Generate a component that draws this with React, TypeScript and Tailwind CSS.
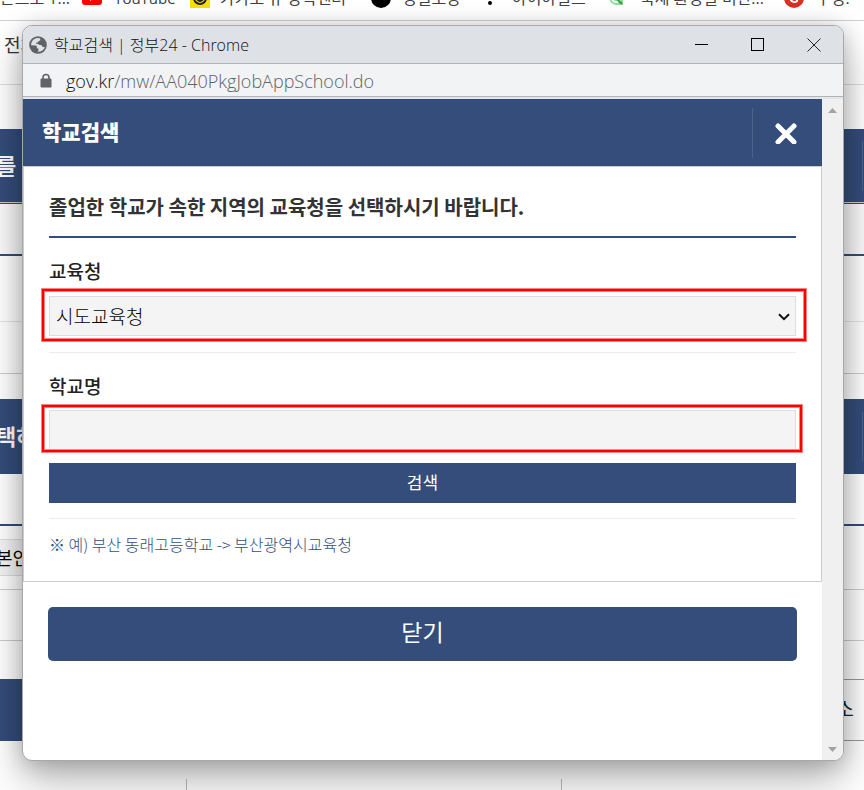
import { useState } from "react";

const regions = ["시도교육청", "서울특별시교육청", "부산광역시교육청", "대구광역시교육청"];

const GlobeIcon = () => (
  <svg viewBox="0 0 18 18" className="h-[18px] w-[18px] shrink-0">
    <circle cx="9" cy="9" r="8.800" fill="#5f6368" />
    <path
      d="M9.500 2.100C6 1.900 3.200 3.900 2.300 7.200L2 9.300l4.200.1c1.200 0 1.700.7 1.700 1.700v1.200l1.500.2v2.400l-1.200.9c3.600.5 6.700-1.700 7.600-4.900l-2.200.1-.8-1.700-2.300-.2-1.300-1.200H7.300V6.600h1.500l.9-1.600 1.500-.5V2.600z"
      fill="#dee1e6"
    />
  </svg>
);

const LockIcon = () => (
  <svg viewBox="0 0 12 16" className="h-4 w-3 shrink-0">
    <path d="M3 7V4.500a3 3 0 016 0V7" fill="none" stroke="#5f6368" strokeWidth="1.6" />
    <rect x="0.5" y="5.500" width="11" height="9" rx="1.2" fill="#5f6368" />
  </svg>
);

const Bookmarks = () => (
  <div className="flex h-[21px] flex-col justify-end overflow-hidden border-b border-[#cfcfcf] pb-3">
    <div className="flex h-5 shrink-0 items-center text-base leading-5 whitespace-nowrap text-[#3c4043]">
      <span className="w-[82px]">폰으로 1...</span>
      <svg viewBox="0 0 20 14" className="mr-3 h-[14px] w-5 shrink-0">
        <rect width="20" height="14" rx="3" fill="#f00" />
        <path d="M8 4l5 3-5 3z" fill="#fff" />
      </svg>
      <span className="w-[76px] text-[15px]">YouTube</span>
      <svg viewBox="0 0 20 20" className="mr-[10px] h-5 w-5 shrink-0">
        <rect width="20" height="20" fill="#f7e000" />
        <circle cx="10" cy="10" r="6" fill="none" stroke="#222" strokeWidth="2" />
        <path d="M7 11q3 4 6 0" fill="none" stroke="#222" strokeWidth="2" />
      </svg>
      <span className="w-[151px]">카카오 뷰 창작센터</span>
      <span className="mr-[11px] h-5 w-5 shrink-0 rounded-full bg-black" />
      <span className="w-[86px]">경일도장</span>
      <span className="mt-[10px] mr-5 h-1 w-1 shrink-0 rounded-full bg-black" />
      <span className="w-[96px]">아이아일스</span>
      <svg viewBox="0 0 16 16" className="mr-4 h-4 w-4 shrink-0">
        <path d="M1 1h14v14H9a8 8 0 01-8-8z" fill="#8fdc9a" />
        <circle cx="8" cy="8" r="4" fill="none" stroke="#fff" strokeWidth="2" />
        <path d="M9 9l5 5" stroke="#2f9e44" strokeWidth="2" />
      </svg>
      <span className="w-[144px]">국세 환경일 비만...</span>
      <svg viewBox="0 0 20 20" className="mr-3 h-5 w-5 shrink-0">
        <circle cx="10" cy="10" r="10" fill="#d93025" />
        <path d="M13 7a4 4 0 100 6v-3h-3" fill="none" stroke="#fff" strokeWidth="2" />
      </svg>
      <span>구성.</span>
    </div>
  </div>
);

const Backdrop = () => (
  <div aria-hidden="true" className="col-start-1 row-start-1 min-w-0 overflow-hidden whitespace-nowrap">
    <Bookmarks />
    <div className="flex h-16 items-center border-b border-[#dcdcdc] pb-4 pl-1 text-lg text-[#333]">
      전체
    </div>
    <div className="h-11" />
    <div className="flex h-[73px] items-center justify-between bg-[#344d7a] -indent-1 text-[22px] font-bold text-white">
      <span>를</span>
      <span className="mr-px h-[50px] w-px bg-[#4b628b]" />
    </div>
    <div className="h-[2px] border-b border-[#344d7a] bg-[#ccc]" />
    <div className="h-[52px] border-b-2 border-[#344d7a] bg-[#fafafa]" />
    <div className="h-[66px] border-b border-[#e5e5e5]" />
    <div className="h-[52px] border-b border-[#ccc]" />
    <div className="h-[25px]" />
    <div className="flex h-[75px] items-center justify-between bg-[#344d7a] -indent-1 text-[22px] font-bold text-white">
      <span>택하</span>
      <span className="mr-px h-[50px] w-px bg-[#4b628b]" />
    </div>
    <div className="h-[52px] border-b-2 border-[#344d7a]" />
    <div className="h-[13px]" />
    <div className="flex h-[37px] w-[60px] items-center border-y border-[#ddd] bg-[#f4f4f4] -indent-1 text-lg text-black">
      본인
    </div>
    <div className="h-[14px] border-b border-[#ccc]" />
    <div className="h-[51px] border-b border-[#ccc]" />
    <div className="mt-[38px] flex h-[62px] justify-between">
      <div className="w-1/4 bg-[#344d7a]" />
      <div className="flex w-1/4 items-center justify-end border-y border-[#999] pr-[10px] text-xl text-[#222]">
        주소
      </div>
    </div>
    <div className="mt-[38px] ml-[186px] h-[11px] w-[376px] border-x border-[#bbb]" />
  </div>
);

const TitleBar = () => (
  <div className="flex h-[38px] items-center justify-between border-b border-[#b0b3b7] bg-[#dee1e6] pr-[22px] pl-[6px]">
    <div className="flex items-center gap-[7px] text-[#111]">
      <GlobeIcon />
      <h1 className="text-base leading-6 font-light">학교검색 | 정부24 - Chrome</h1>
    </div>
    <div className="flex items-center gap-[42px]">
      <button aria-label="최소화">
        <svg viewBox="0 0 14 14" className="h-[14px] w-[14px]" shapeRendering="crispEdges">
          <path d="M0 6.500h13" stroke="#000" />
        </svg>
      </button>
      <button aria-label="최대화">
        <svg viewBox="0 0 14 14" className="h-[14px] w-[14px]" shapeRendering="crispEdges">
          <rect x="0.5" y="0.5" width="12" height="12" fill="none" stroke="#000" />
        </svg>
      </button>
      <button aria-label="창 닫기">
        <svg viewBox="0 0 14 14" className="h-[14px] w-[14px]">
          <path d="M0.500 0.500l13 13M13.500 0.500l-13 13" stroke="#222" />
        </svg>
      </button>
    </div>
  </div>
);

const AddressBar = () => (
  <div className="flex h-[35px] items-center gap-[14px] border-b-2 border-[#e4e5e7] bg-[#f1f3f4] pl-[17px] shadow-[inset_0_-1px_0_#b0b3b7]">
    <LockIcon />
    <p className="text-lg leading-6 font-light text-[#5f6368]">
      <span className="text-[#111]">gov.kr</span>/mw/AA040PkgJobAppSchool.do
    </p>
  </div>
);

const ScrollBar = () => (
  <div className="flex w-[21px] shrink-0 flex-col items-center justify-between bg-[#f0f0f0] pt-[9px] pb-2">
    <svg viewBox="0 0 9 5" className="h-[5px] w-[9px]">
      <path d="M0 5L4.500 0 9 5z" fill="#a3a3a3" />
    </svg>
    <svg viewBox="0 0 9 5" className="h-[5px] w-[9px]">
      <path d="M0 0h9L4.500 5z" fill="#a3a3a3" />
    </svg>
  </div>
);

const App = () => {
  const [region, setRegion] = useState(regions[0]);
  const [school, setSchool] = useState("");

  return (
    <div className="grid min-h-screen grid-cols-1 overflow-hidden bg-white font-['Open_Sans','Noto_Sans_CJK_KR',sans-serif]">
      <Backdrop />
      <div className="z-10 col-start-1 row-start-1 flex pt-[25px] pr-5 pb-[29px] pl-[22px]">
        <div className="flex min-w-0 flex-1 flex-col overflow-hidden rounded-[10px] border border-[#a8a8a8] bg-white shadow-[0_2px_21px_rgba(0,0,0,0.2),0_20px_40px_rgba(0,0,0,0.28)]">
          <TitleBar />
          <AddressBar />
          <div className="flex flex-1">
            <main className="min-w-0 flex-1 font-['Noto_Sans_CJK_KR',sans-serif]">
              <header className="flex h-[67px] items-center justify-between bg-[#344d7a] pl-[19px] text-white">
                <h2 className="pb-1 text-[21px] leading-8 font-black">학교검색</h2>
                <button
                  aria-label="닫기"
                  className="flex h-[50px] w-[70px] items-center justify-center border-l border-[#4b628b] pr-1"
                >
                  <svg viewBox="0 0 22 22" className="h-[22px] w-[22px]">
                    <path d="M3 4l16 16M19 4L3 20" stroke="#fff" strokeWidth="5" strokeLinecap="round" />
                  </svg>
                </button>
              </header>

              <form
                className="border border-[#ccc] px-[25px] pt-[25px] pb-6"
                onSubmit={(e) => e.preventDefault()}
              >
                <h3 className="border-b-2 border-[#344d7a] pb-[14px] text-xl leading-[30px] font-bold text-[#333]">
                  졸업한 학교가 속한 지역의 교육청을 선택하시기 바랍니다.
                </h3>

                <div className="border-b border-[#ececec] pt-5 pb-4">
                  <label
                    htmlFor="region"
                    className="mb-3 block text-[19px] leading-[26px] font-medium text-[#222]"
                  >
                    교육청
                  </label>
                  <div className="relative">
                    <select
                      id="region"
                      value={region}
                      onChange={(e) => setRegion(e.target.value)}
                      className="block h-10 w-full appearance-none border border-[#ddd] bg-[#f4f4f5] px-[6px] text-[19px] font-light text-black"
                    >
                      {regions.map((name) => (
                        <option key={name}>{name}</option>
                      ))}
                    </select>
                    <svg
                      viewBox="0 0 12 8"
                      className="pointer-events-none absolute top-[17px] right-[6px] h-2 w-3"
                    >
                      <path d="M1 1.200l5 5 5-5" fill="none" stroke="#111" strokeWidth="2" />
                    </svg>
                    <span className="pointer-events-none absolute -top-[7px] -right-[10px] -bottom-[5px] -left-[7px] border-2 border-[#f00] shadow-[0_0_0_1px_#ff8080,inset_0_0_0_1px_#ff8080]" />
                  </div>
                </div>

                <div className="border-b border-[#ececec] pt-5 pb-[15px]">
                  <label
                    htmlFor="school"
                    className="mb-[11px] block text-[19px] leading-[26px] font-medium text-[#222]"
                  >
                    학교명
                  </label>
                  <div className="relative">
                    <input
                      id="school"
                      value={school}
                      onChange={(e) => setSchool(e.target.value)}
                      className="block h-10 w-full border border-[#ddd] bg-[#f4f4f5] px-[6px] text-[19px]"
                    />
                    <span className="pointer-events-none absolute -top-[5px] -right-[6px] -bottom-[2px] -left-[7px] border-2 border-[#f00] shadow-[0_0_0_1px_#ff8080,inset_0_0_0_1px_#ff8080]" />
                  </div>
                  <button
                    type="submit"
                    className="mt-[13px] h-10 w-full bg-[#344d7a] pb-[3px] text-[17px] text-white"
                  >
                    검색
                  </button>
                </div>

                <p className="pt-3 text-base leading-[26px] font-light text-[#344d7a]">
                  ※ 예) 부산 동래고등학교 -&gt; 부산광역시교육청
                </p>
              </form>

              <div className="px-[25px] pt-[25px] pb-6">
                <button className="h-[54px] w-full rounded-[5px] bg-[#344d7a] pb-[5px] text-[23px] text-white">
                  닫기
                </button>
              </div>
            </main>
            <ScrollBar />
          </div>
        </div>
      </div>
    </div>
  );
};

export default App;
